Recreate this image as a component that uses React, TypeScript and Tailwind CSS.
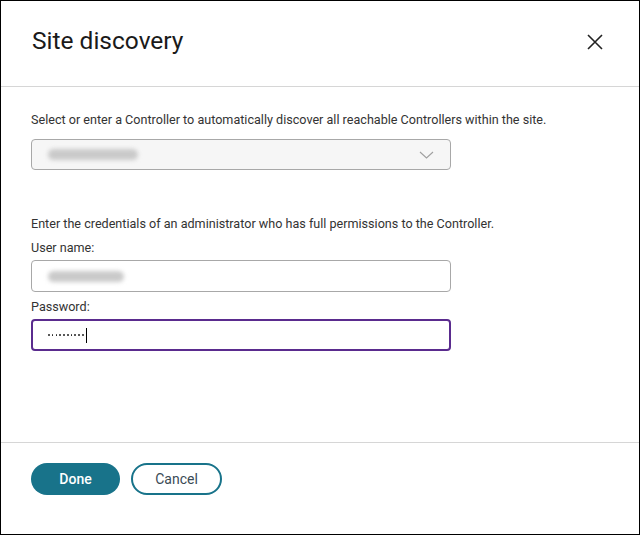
import React from "react";

export default function App() {
  return (
    <div className="w-[640px] h-[535px] bg-white border border-black flex flex-col text-[#222]" style={{ fontFamily: "Roboto, 'Noto Sans', sans-serif" }}>
      <div className="h-[86px] shrink-0 border-b border-[#d6d6d6] flex items-center justify-between pl-[31px] pr-[36px]">
        <div className="text-[24.5px] leading-none text-[#1a1a1a] pb-[4px]">Site discovery</div>
        <svg width="16" height="16" viewBox="0 0 16 16" className="mb-[3px]">
          <path d="M1 1 L15 15 M15 1 L1 15" stroke="#222" strokeWidth="1.6" />
        </svg>
      </div>
      <div className="flex-1 flex flex-col pl-[30px] pt-[25px]">
        <div className="text-[12.6px] leading-[16px] text-[#333]">Select or enter a Controller to automatically discover all reachable Controllers within the site.</div>
        <div className="mt-[11px] w-[420px] h-[31px] rounded-[4px] border border-[#a8a8a8] bg-[#f6f6f6] flex items-center justify-between pl-[16px] pr-[16px]">
          <div className="w-[90px] h-[11px] rounded-full bg-[#cacaca] blur-[2px]" />
          <svg width="15" height="8" viewBox="0 0 15 8">
            <path d="M1 1 L7.5 7 L14 1" stroke="#a0a0a0" strokeWidth="1.1" fill="none" />
          </svg>
        </div>
        <div className="mt-[46px] text-[12.6px] leading-[16px] text-[#333]">Enter the credentials of an administrator who has full permissions to the Controller.</div>
        <div className="mt-[8px] text-[12.6px] leading-[16px] text-[#333]">User name:</div>
        <div className="mt-[4px] w-[420px] h-[32px] rounded-[4px] border border-[#a8a8a8] bg-white flex items-center pl-[16px]">
          <div className="w-[76px] h-[11px] rounded-full bg-[#cacaca] blur-[2px]" />
        </div>
        <div className="mt-[7px] text-[12.6px] leading-[16px] text-[#333]">Password:</div>
        <div className="mt-[4px] w-[420px] h-[32px] rounded-[4px] border-2 border-[#5a2b8e] bg-white flex items-center pl-[15px]">
          <div className="flex items-center gap-[2.2px]">
            {Array.from({ length: 10 }).map((_, i) => (
              <div key={i} className="w-[1.6px] h-[1.6px] rounded-full bg-[#222]" />
            ))}
          </div>
          <div className="ml-[2px] w-px h-[15px] bg-black" />
        </div>
      </div>
      <div className="h-[92px] shrink-0 border-t border-[#d6d6d6] flex items-start gap-[11px] pl-[30px] pt-[20px]">
        <button className="w-[89px] h-[32px] rounded-full bg-[#18738a] text-white text-[14px] font-medium">Done</button>
        <button className="w-[91px] h-[32px] rounded-full border-2 border-[#18738a] bg-white text-[#3a4a55] text-[14px]">Cancel</button>
      </div>
    </div>
  );
}
